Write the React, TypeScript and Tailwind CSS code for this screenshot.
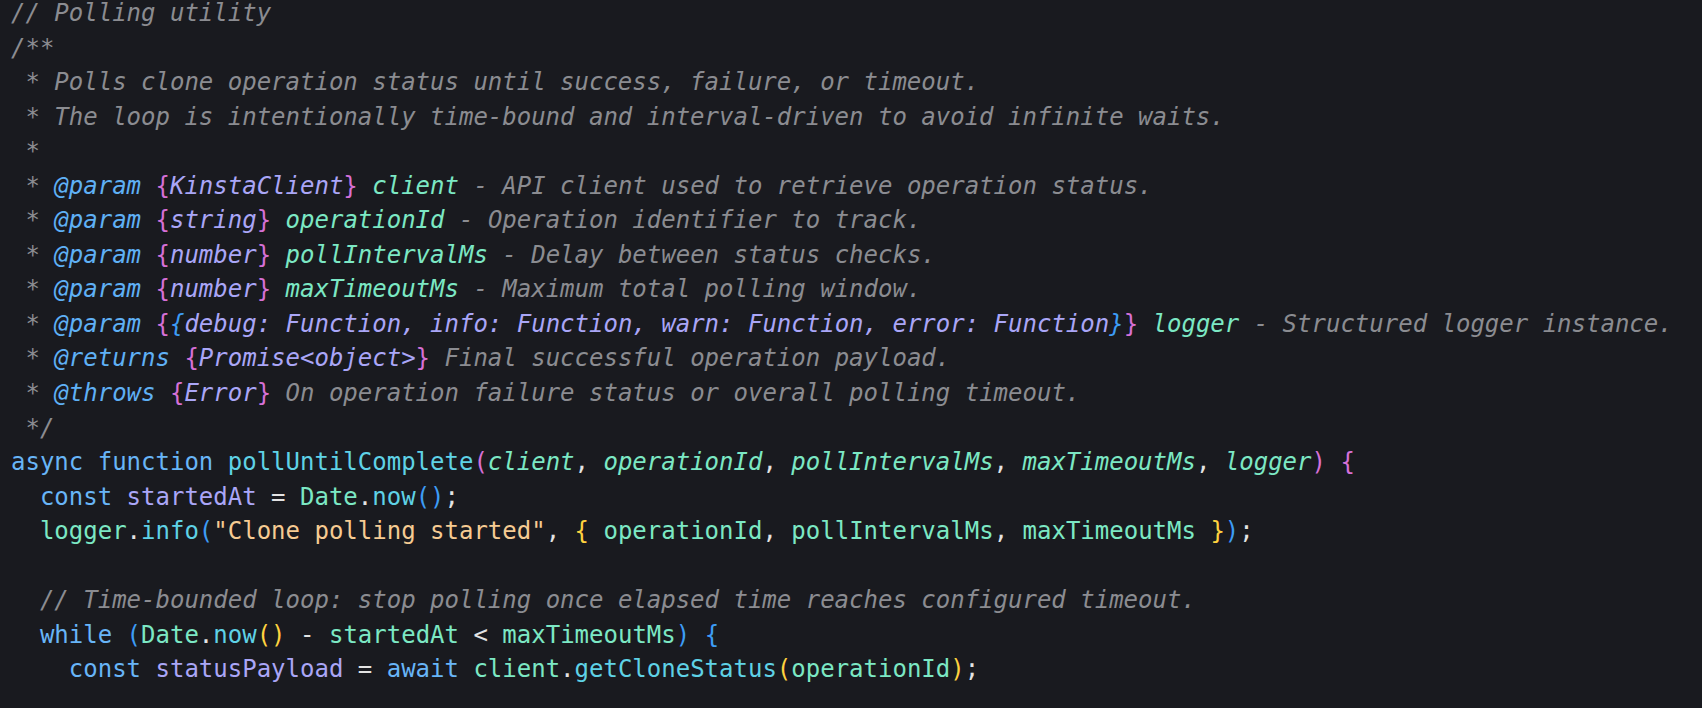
import React from 'react';

// token palette
const c = {
  cm: "text-[#8b8c91] italic",
  tag: "text-[#5fb0f5] italic",
  pk: "text-[#d670d6]",
  ty: "text-[#aaa6f7] italic",
  pn: "text-[#7ce8c4] italic",
  kw: "text-[#68b5f7]",
  fn: "text-[#5fd2e6]",
  vr: "text-[#7ce8c4]",
  dc: "text-[#aaa6f7]",
  str: "text-[#f6cb92]",
  yb: "text-[#ffd23f]",
  bb: "text-[#3d9cf5]",
  p: "text-[#e3e3e3]",
};

type Tok = [string, string];

const lines: Tok[][] = [
  [["// Polling utility", c.cm]],
  [["/**", c.cm]],
  [[" * Polls clone operation status until success, failure, or timeout.", c.cm]],
  [[" * The loop is intentionally time-bound and interval-driven to avoid infinite waits.", c.cm]],
  [[" *", c.cm]],
  [[" * ", c.cm], ["@param", c.tag], [" ", c.cm], ["{", c.pk], ["KinstaClient", c.ty], ["}", c.pk], [" ", c.cm], ["client", c.pn], [" - API client used to retrieve operation status.", c.cm]],
  [[" * ", c.cm], ["@param", c.tag], [" ", c.cm], ["{", c.pk], ["string", c.ty], ["}", c.pk], [" ", c.cm], ["operationId", c.pn], [" - Operation identifier to track.", c.cm]],
  [[" * ", c.cm], ["@param", c.tag], [" ", c.cm], ["{", c.pk], ["number", c.ty], ["}", c.pk], [" ", c.cm], ["pollIntervalMs", c.pn], [" - Delay between status checks.", c.cm]],
  [[" * ", c.cm], ["@param", c.tag], [" ", c.cm], ["{", c.pk], ["number", c.ty], ["}", c.pk], [" ", c.cm], ["maxTimeoutMs", c.pn], [" - Maximum total polling window.", c.cm]],
  [[" * ", c.cm], ["@param", c.tag], [" ", c.cm], ["{", c.pk], ["{", c.bb + " italic"], ["debug: Function, info: Function, warn: Function, error: Function", c.ty], ["}", c.bb + " italic"], ["}", c.pk], [" ", c.cm], ["logger", c.pn], [" - Structured logger instance.", c.cm]],
  [[" * ", c.cm], ["@returns", c.tag], [" ", c.cm], ["{", c.pk], ["Promise<object>", c.ty], ["}", c.pk], [" Final successful operation payload.", c.cm]],
  [[" * ", c.cm], ["@throws", c.tag], [" ", c.cm], ["{", c.pk], ["Error", c.ty], ["}", c.pk], [" On operation failure status or overall polling timeout.", c.cm]],
  [[" */", c.cm]],
  [["async", c.kw], [" ", c.p], ["function", c.kw], [" ", c.p], ["pollUntilComplete", c.fn], ["(", c.pk], ["client", c.pn], [", ", c.p], ["operationId", c.pn], [", ", c.p], ["pollIntervalMs", c.pn], [", ", c.p], ["maxTimeoutMs", c.pn], [", ", c.p], ["logger", c.pn], [")", c.pk], [" ", c.p], ["{", c.pk]],
  [["  ", c.p], ["const", c.kw], [" ", c.p], ["startedAt", c.dc], [" = ", c.p], ["Date", c.vr], [".", c.p], ["now", c.fn], ["()", c.bb], [";", c.p]],
  [["  ", c.p], ["logger", c.vr], [".", c.p], ["info", c.fn], ["(", c.bb], ["\"Clone polling started\"", c.str], [", ", c.p], ["{", c.yb], [" ", c.p], ["operationId", c.vr], [", ", c.p], ["pollIntervalMs", c.vr], [", ", c.p], ["maxTimeoutMs", c.vr], [" ", c.p], ["}", c.yb], [")", c.bb], [";", c.p]],
  [],
  [["  ", c.p], ["// Time-bounded loop: stop polling once elapsed time reaches configured timeout.", c.cm]],
  [["  ", c.p], ["while", c.kw], [" ", c.p], ["(", c.bb], ["Date", c.vr], [".", c.p], ["now", c.fn], ["()", c.yb], [" - ", c.p], ["startedAt", c.vr], [" < ", c.p], ["maxTimeoutMs", c.vr], [")", c.bb], [" ", c.p], ["{", c.bb]],
  [["    ", c.p], ["const", c.kw], [" ", c.p], ["statusPayload", c.dc], [" = ", c.p], ["await", c.kw], [" ", c.p], ["client", c.vr], [".", c.p], ["getCloneStatus", c.fn], ["(", c.yb], ["operationId", c.vr], [")", c.yb], [";", c.p]],
  [],
];

export default function App() {
  return (
    <div className="w-[1702px] h-[708px] overflow-hidden bg-[#191a1f]">
      <pre
        className="m-0 mt-[-4px] pl-[11px] text-[24px] leading-[34.56px] whitespace-pre"
        style={{ fontFamily: '"DejaVu Sans Mono", "Liberation Mono", monospace' }}
      >
        {lines.map((line, i) => (
          <div key={i} className="h-[34.56px]">
            {line.map(([text, cls], j) => (
              <span key={j} className={cls}>{text}</span>
            ))}
          </div>
        ))}
      </pre>
    </div>
  );
}
